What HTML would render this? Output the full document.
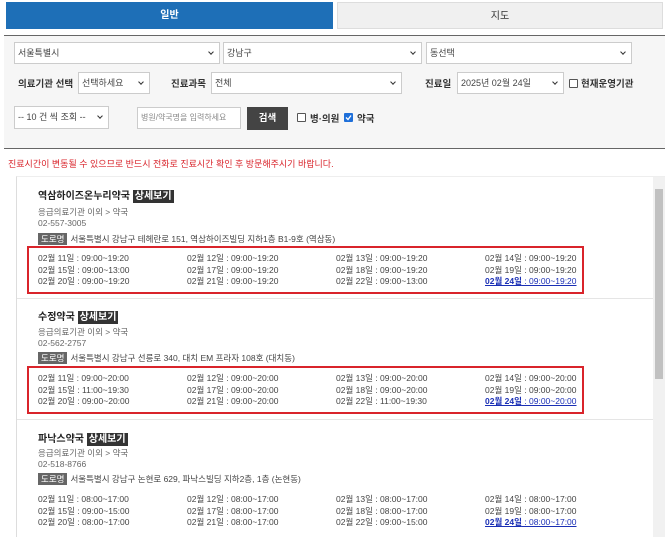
<!DOCTYPE html>
<html><head><meta charset="utf-8"><style>
*{box-sizing:border-box;margin:0;padding:0}
body{width:670px;height:537px;overflow:hidden;background:#fff;font-family:"Liberation Sans","Noto Sans CJK KR",sans-serif;font-size:9px;color:#333;position:relative}
.abs{position:absolute}
.tab{position:absolute;top:2px;height:27px;line-height:27px;text-align:center;font-size:10px}
.sel{position:absolute;height:22px;background:#fff;border:1px solid #ccc;font-size:9px;line-height:20px;padding-left:3px;color:#444}
.sel:after{content:"";position:absolute;right:6px;top:7px;width:3px;height:3px;border-right:1.3px solid #333;border-bottom:1.3px solid #333;transform:rotate(45deg)}
.inp{position:absolute;height:22px;background:#fff;border:1px solid #ccc;line-height:20px;padding-left:3px}
.lbl{position:absolute;font-size:9.5px;font-weight:bold;color:#333}
.cb{position:absolute;width:9px;height:9px;border:1px solid #555;border-radius:1px;background:#fff}
.t{position:absolute;font-size:8.5px;color:#444;white-space:nowrap}
.title{position:absolute;font-size:10px;font-weight:bold;color:#222}
.dt{background:#333;color:#fff;padding:1px 2px}
.road{background:#666;color:#fff;padding:1px 3px;margin-right:3px}
.box{position:absolute;left:27px;width:557px;height:48px;border:2px solid #d9242b}
.row{position:absolute;font-size:8.5px;line-height:11.5px;color:#444;white-space:nowrap}
.lnk{color:#1a2fb5;text-decoration:underline}
</style></head><body>
<div class="tab" style="left:6px;width:327px;background:#1e6fb7;color:#fff;font-weight:bold">일반</div>
<div class="tab" style="left:337px;width:326px;background:#f0f0f0;border:1px solid #ddd;color:#333">지도</div>
<div class="abs" style="left:4px;top:35px;width:661px;height:114px;background:#f6f6f6;border-top:1px solid #666;border-bottom:1px solid #666"></div>
<div class="sel" style="left:14px;top:42px;width:206px">서울특별시</div>
<div class="sel" style="left:426px;top:42px;width:206px">동선택</div>
<div class="sel" style="left:223px;top:42px;width:199px">강남구</div>
<div class="lbl" style="left:18px;top:76px">의료기관 선택</div>
<div class="sel" style="left:78px;top:72px;width:72px">선택하세요</div>
<div class="lbl" style="left:171px;top:76px">진료과목</div>
<div class="sel" style="left:211px;top:72px;width:191px">전체</div>
<div class="lbl" style="left:425px;top:76px">진료일</div>
<div class="sel" style="left:457px;top:72px;width:107px">2025년 02월 24일</div>
<div class="cb" style="left:569px;top:79px"></div>
<div class="lbl" style="left:581px;top:76px">현재운영기관</div>
<div class="sel" style="left:14px;top:106px;width:95px;height:23px">-- 10 건 씩 조회 --</div>
<div class="inp" style="left:137px;top:107px;width:104px;font-size:8px;color:#888">병원/약국명을 입력하세요</div>
<div class="abs" style="left:247px;top:107px;width:41px;height:23px;background:#444;color:#fff;font-size:9.5px;font-weight:bold;text-align:center;line-height:23px">검색</div>
<div class="cb" style="left:297px;top:113px"></div>
<div class="lbl" style="left:310px;top:111px">병·의원</div>
<div class="cb" style="left:344px;top:113px;background:#1e6fd9;border-color:#1e6fd9"><svg width="7" height="7" viewBox="0 0 7 7" style="position:absolute;left:0;top:0"><path d="M1 3.5L3 5.5L6 1.5" stroke="#fff" stroke-width="1.3" fill="none"/></svg></div>
<div class="lbl" style="left:357px;top:111px">약국</div>
<div class="t" style="left:8px;top:157px;color:#d9242b;font-size:9px">진료시간이 변동될 수 있으므로 반드시 전화로 진료시간 확인 후 방문해주시기 바랍니다.</div>
<div class="abs" style="left:16px;top:176px;width:649px;height:361px;border-left:1px solid #ddd;border-top:1px solid #eee"></div>
<div class="abs" style="left:653px;top:177px;width:12px;height:360px;background:#f1f1f1"></div>
<div class="abs" style="left:655px;top:189px;width:8px;height:190px;background:#c1c1c1"></div>
<div class="abs" style="left:17px;top:298px;width:636px;height:1px;background:#e5e5e5"></div>
<div class="abs" style="left:17px;top:419px;width:636px;height:1px;background:#e5e5e5"></div>

<div class="title" style="left:38px;top:187px">역삼하이즈온누리약국 <span class="dt">상세보기</span></div>
<div class="t" style="left:38px;top:206px;color:#666">응급의료기관 이외 &gt; 약국</div>
<div class="t" style="left:38px;top:218px;color:#666">02-557-3005</div>
<div class="t" style="left:38px;top:233px"><span class="road">도로명</span>서울특별시 강남구 테헤란로 151, 역삼하이즈빌딩 지하1층 B1-9호 (역삼동)</div>
<div class="box" style="top:246px"></div>
<div class="row" style="left:38px;top:253px">02월 11일 : 09:00~19:20<br>02월 15일 : 09:00~13:00<br>02월 20일 : 09:00~19:20</div>
<div class="row" style="left:187px;top:253px">02월 12일 : 09:00~19:20<br>02월 17일 : 09:00~19:20<br>02월 21일 : 09:00~19:20</div>
<div class="row" style="left:336px;top:253px">02월 13일 : 09:00~19:20<br>02월 18일 : 09:00~19:20<br>02월 22일 : 09:00~13:00</div>
<div class="row" style="left:485px;top:253px">02월 14일 : 09:00~19:20<br>02월 19일 : 09:00~19:20<br><span class="lnk"><b>02월 24일</b> : 09:00~19:20</span></div>

<div class="title" style="left:38px;top:308px">수정약국 <span class="dt">상세보기</span></div>
<div class="t" style="left:38px;top:326px;color:#666">응급의료기관 이외 &gt; 약국</div>
<div class="t" style="left:38px;top:338px;color:#666">02-562-2757</div>
<div class="t" style="left:38px;top:352px"><span class="road">도로명</span>서울특별시 강남구 선릉로 340, 대치 EM 프라자 108호 (대치동)</div>
<div class="box" style="top:366px"></div>
<div class="row" style="left:38px;top:373px">02월 11일 : 09:00~20:00<br>02월 15일 : 11:00~19:30<br>02월 20일 : 09:00~20:00</div>
<div class="row" style="left:187px;top:373px">02월 12일 : 09:00~20:00<br>02월 17일 : 09:00~20:00<br>02월 21일 : 09:00~20:00</div>
<div class="row" style="left:336px;top:373px">02월 13일 : 09:00~20:00<br>02월 18일 : 09:00~20:00<br>02월 22일 : 11:00~19:30</div>
<div class="row" style="left:485px;top:373px">02월 14일 : 09:00~20:00<br>02월 19일 : 09:00~20:00<br><span class="lnk"><b>02월 24일</b> : 09:00~20:00</span></div>

<div class="title" style="left:38px;top:430px">파낙스약국 <span class="dt">상세보기</span></div>
<div class="t" style="left:38px;top:447px;color:#666">응급의료기관 이외 &gt; 약국</div>
<div class="t" style="left:38px;top:459px;color:#666">02-518-8766</div>
<div class="t" style="left:38px;top:473px"><span class="road">도로명</span>서울특별시 강남구 논현로 629, 파낙스빌딩 지하2층, 1층 (논현동)</div>
<div class="row" style="left:38px;top:494px">02월 11일 : 08:00~17:00<br>02월 15일 : 09:00~15:00<br>02월 20일 : 08:00~17:00</div>
<div class="row" style="left:187px;top:494px">02월 12일 : 08:00~17:00<br>02월 17일 : 08:00~17:00<br>02월 21일 : 08:00~17:00</div>
<div class="row" style="left:336px;top:494px">02월 13일 : 08:00~17:00<br>02월 18일 : 08:00~17:00<br>02월 22일 : 09:00~15:00</div>
<div class="row" style="left:485px;top:494px">02월 14일 : 08:00~17:00<br>02월 19일 : 08:00~17:00<br><span class="lnk"><b>02월 24일</b> : 08:00~17:00</span></div>
</body></html>
